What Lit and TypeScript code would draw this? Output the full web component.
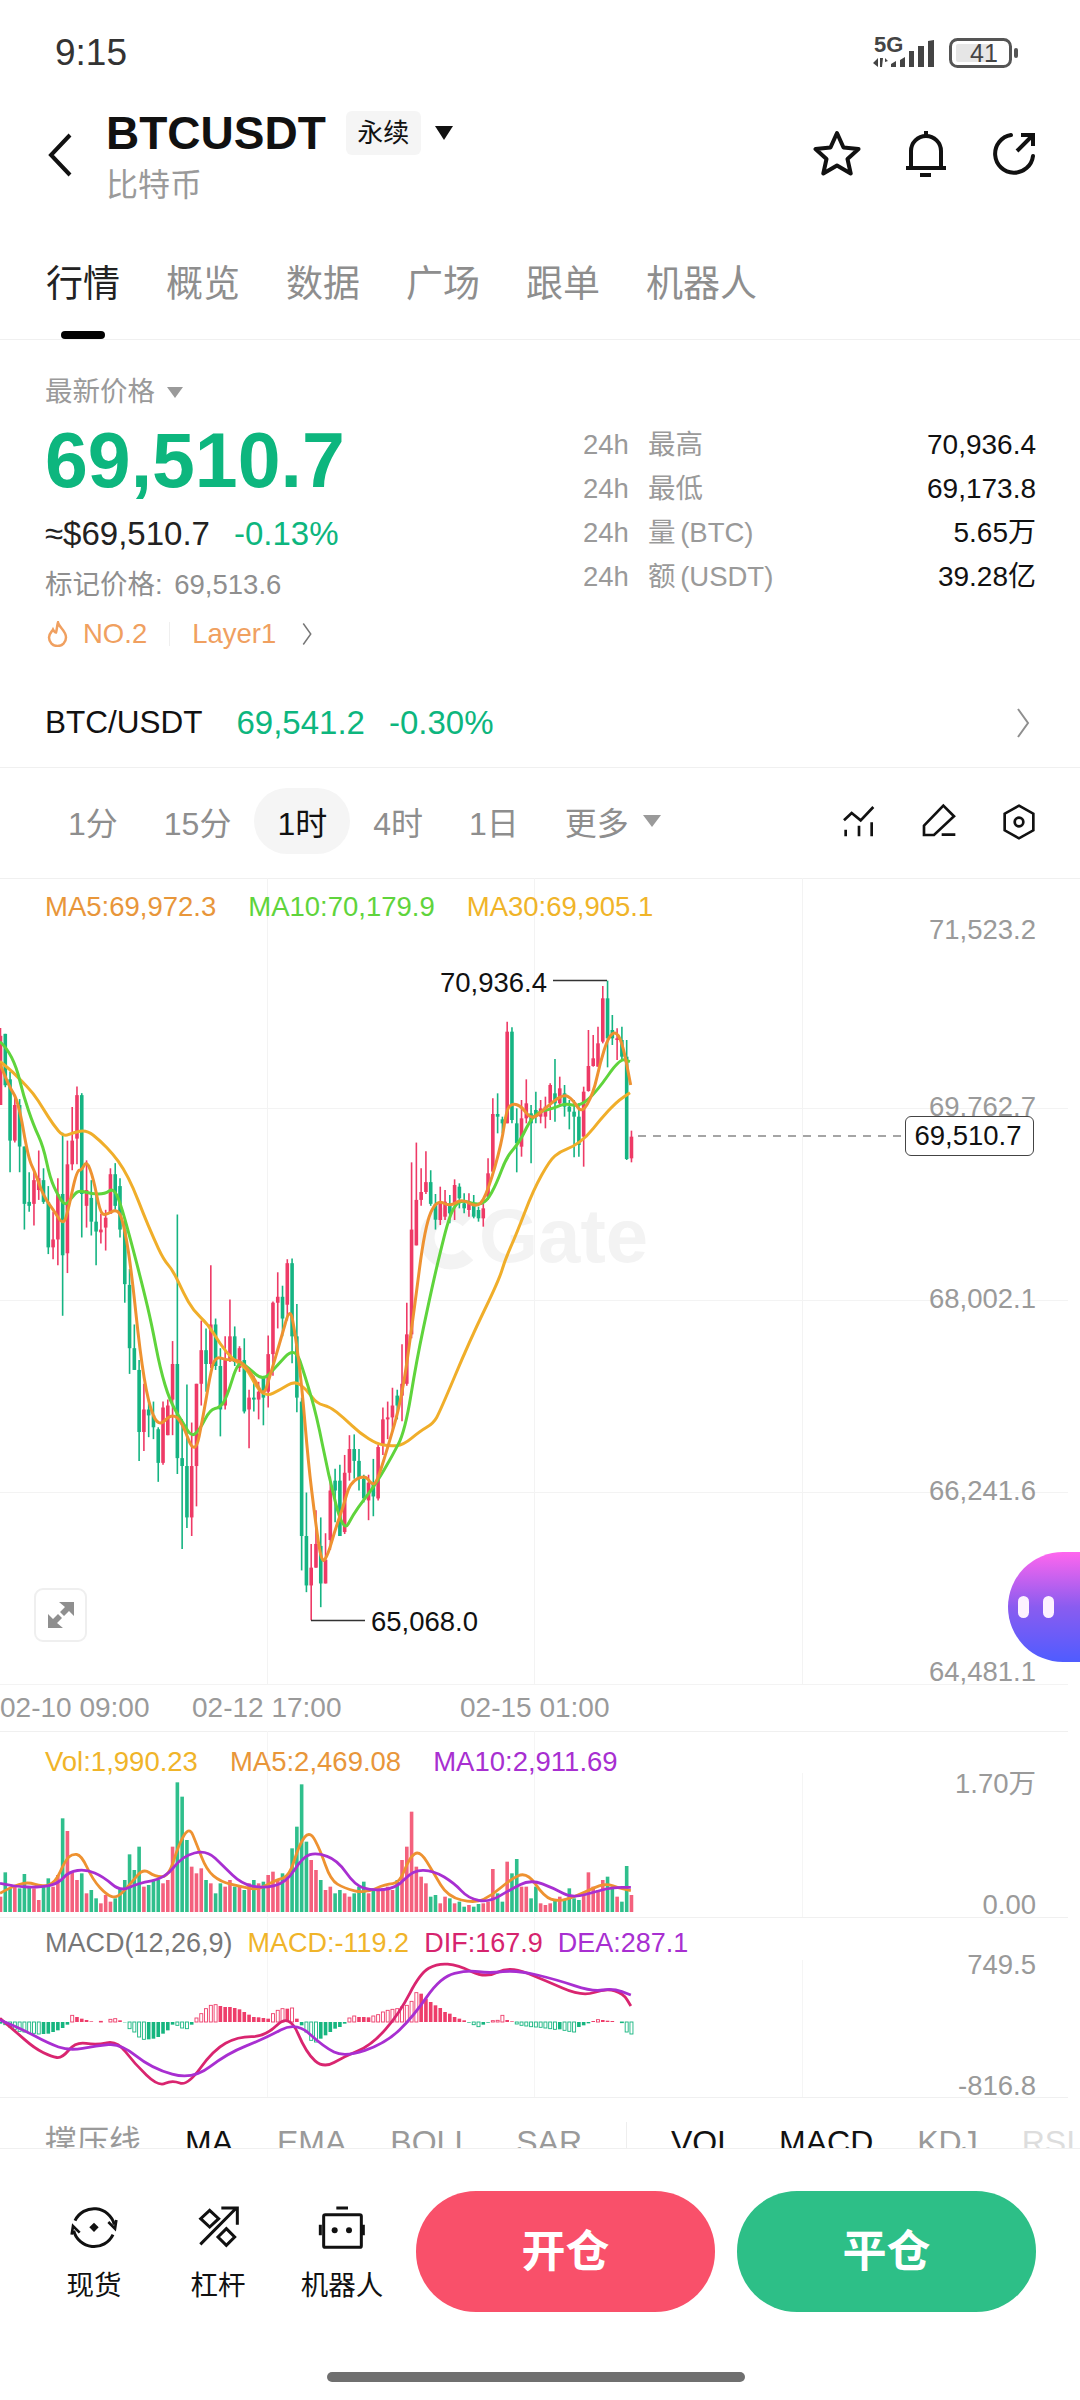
import { LitElement, css, html, svg } from 'lit';
import { customElement } from 'lit/decorators.js';

type Pt = [number, number];
type Raw = [string, number, number, number, number];

// candles traced from the chart: color, wick top, body top, body bottom, wick bottom
const LEFT: Raw[] = [
  ['r',20,40,215,215],['g',35,35,165,170],['g',130,150,305,385],['r',195,215,305,310],['g',200,215,320,385],
  ['g',320,320,465,530],['g',385,460,470,485],['r',380,405,465,520],['r',330,400,430,455],['g',375,405,460,465],
  ['g',420,460,575,592],['r',485,555,575,605],['r',400,440,555,620],['g',285,440,595,748],['r',305,365,590,640],
  ['r',220,305,365,380],['r',168,190,300,365],['g',185,190,440,550],['r',355,430,470,525],['g',405,450,510,545],
  ['g',430,510,535,620],['r',490,530,537,565],['r',480,500,525,583],['r',375,390,490,490],['g',362,390,470,480],
  ['g',400,420,530,550],['g',510,530,668,715],['g',630,670,830,895],['g',770,830,885,885],['g',860,885,1042,1115],
  ['r',920,985,1042,1090],['g',960,985,1000,1055],['g',965,1000,1030,1060],['g',1030,1035,1120,1168],['r',965,980,1120,1125],
  ['r',960,975,1050,1050],['r',812,870,960,1050],['g',492,870,1108,1148],['g',1010,1108,1128,1338],['g',922,1128,1258,1285],
  ['r',1018,1128,1258,1305],['r',920,920,1128,1230],['r',760,835,920,975],['g',780,835,870,940],['r',620,770,870,880],
  ['g',755,770,875,885],['g',830,875,985,1053],['r',800,860,975,985],['r',707,800,860,865],['g',775,800,865,875],
  ['r',825,830,880,890],['g',805,860,990,995],['r',935,955,985,1083],['g',900,955,960,990],['r',915,940,960,1010],
  ['g',900,905,955,1025],['r',798,845,940,980],['r',712,715,845,900],['r',638,700,715,780],['g',672,700,755,800],
  ['r',605,615,720,760],['g',603,615,800,868],['g',718,800,955,992],['g',955,965,1305,1392],['g',1195,1305,1430,1447],
  ['r',1325,1385,1430,1518],['r',1240,1325,1385,1385],['g',1258,1330,1425,1485],['r',1298,1365,1425,1425],['r',1155,1190,1315,1340],
  ['g',1135,1165,1190,1270],['g',1125,1165,1305,1305],['r',1100,1145,1295,1300],['r',1050,1085,1145,1165],['g',1048,1085,1115,1160],
  ['g',1085,1115,1160,1190],['g',1150,1160,1210,1220],['r',1150,1170,1215,1265],['g',1110,1170,1205,1255],['r',1075,1080,1210,1215],
  ['r',980,1010,1075,1100],['r',965,1005,1010,1060],['r',930,975,1005,1040],['g',935,950,975,1010],['r',820,920,950,1015],
  ['r',715,795,920,925],['r',360,530,795,805],['r',310,455,570,570],['r',375,435,455,470],['r',332,410,435,440],
  ['g',380,410,465,470],['g',440,465,505,530],
];

const RIGHT: Raw[] = [
  ['r',680,725,780,795],['r',690,725,770,780],['g',705,730,760,790],['r',658,675,730,780],['g',670,680,715,745],
  ['g',700,730,745,760],['r',700,725,750,770],['g',705,735,770,775],['g',740,750,775,785],['r',730,745,775,800],
  ['r',595,640,710,720],['r',415,462,635,640],['g',400,462,470,520],['g',470,478,490,520],['r',185,215,490,490],
  ['g',202,215,480,490],['g',445,490,550,637],['r',420,475,560,590],['r',358,430,475,490],['g',435,460,490,610],
  ['g',395,450,470,490],['r',420,445,470,490],['r',410,440,470,505],['r',370,375,430,480],['g',297,400,430,485],
  ['r',350,385,430,440],['g',375,400,440,470],['g',420,440,455,508],['g',420,455,470,592],['g',430,470,555,590],
  ['r',380,395,530,620],['r',210,318,393,395],['r',225,295,318,320],['r',200,250,320,320],['r',78,115,245,250],
  ['g',62,115,235,322],['g',165,210,235,255],['r',205,235,240,300],['g',200,240,290,300],['g',240,290,597,600],
  ['r',512,530,595,607],
];

const leftY = (y: number) => 1020 + y / 2.529;
const rightY = (y: number) => 960 + y / 3;
const candleX = (i: number) => 4.78 * i + 0.5;

const candles = [
  ...LEFT.map(([c, a, b, d, e]) => ({ c, hi: leftY(a), top: leftY(b), bot: leftY(d), lo: leftY(e) })),
  ...RIGHT.map(([c, a, b, d, e]) => ({ c, hi: rightY(a), top: rightY(b), bot: rightY(d), lo: rightY(e) })),
];

const fromLeft = (pts: number[][]): Pt[] => pts.map(([x, y]) => [x / 3, leftY(y)]);
const fromRight = (pts: number[][]): Pt[] => pts.map(([x, y]) => [400 + x / 3, rightY(y)]);
const fromLower = (pts: number[][]): Pt[] => pts.map(([x, y]) => [x / 1.452, 1680 + y / 3]);

const MA30: Pt[] = [
  ...fromLeft([[0,105],[30,125],[60,150],[100,185],[130,225],[160,265],[190,295],[220,285],[260,278],[300,305],[340,340],[370,375],[400,425],[430,490],[460,550],[490,605],[520,635],[550,690],[580,735],[625,770],[660,820],[700,860],[740,880],[770,930],[800,952],[840,935],[885,912],[920,935],[950,970],[990,978],[1030,1005],[1080,1045],[1130,1072],[1170,1078],[1210,1075],[1260,1040],[1300,1020],[1320,990]]),
  [470, 1340],
  [499, 1280],
  ...fromRight([[315,900],[350,820],[400,690],[450,600],[480,575],[520,560],[560,530],[600,480],[650,425],[690,398]]),
];

const MA5: Pt[] = [
  ...fromLeft([[0,110],[25,165],[55,205],[85,350],[105,385],[130,445],[160,480],[190,520],[205,480],[230,380],[245,380],[260,355],[280,400],[300,485],[315,495],[355,475],[375,530],[395,640],[420,840],[445,970],[475,1030],[515,995],[545,1015],[585,1105],[610,1000],[630,900],[645,850],[680,860],[720,860],[760,900],[790,955],[810,900],[845,800],[870,725],[885,790],[905,920],[925,1120],[945,1260],[965,1378],[985,1350],[1005,1290],[1030,1230],[1050,1170],[1095,1150],[1115,1175],[1130,1170],[1160,1090],[1205,960],[1240,750],[1275,520]]),
  ...fromRight([[110,718],[150,740],[185,716],[235,745],[265,690],[305,550],[320,445],[340,430],[365,440],[395,480],[430,450],[490,400],[520,420],[545,462],[580,400],[600,310],[625,230],[650,213],[670,260],[692,375]]),
];

const MA10: Pt[] = [
  ...fromLeft([[0,55],[20,70],[50,120],[70,190],[100,265],[130,320],[150,400],[175,445],[195,470],[215,450],[235,430],[275,440],[315,440],[340,425],[360,460],[390,550],[430,680],[455,770],[480,880],[510,965],[550,1020],[575,1055],[600,1035],[630,985],[660,980],[680,955],[715,860],[745,880],[790,912],[825,880],[885,825],[915,900],[950,1000],[985,1150],[1030,1298],[1060,1250],[1090,1215],[1130,1170],[1175,1105],[1215,1040],[1250,860],[1290,700]]),
  ...fromRight([[115,900],[150,760],[180,718],[230,735],[260,725],[290,670],[320,590],[360,545],[400,460],[460,445],[495,430],[540,440],[590,395],[660,295],[690,305]]),
];

const VOL_TOPS = [
  650,577,625,620,625,582,620,625,660,620,595,620,585,415,453,575,600,580,640,630,
  655,670,645,665,655,625,600,523,570,500,620,615,600,600,610,600,500,307,350,480,
  560,580,565,600,610,640,610,620,600,620,615,630,610,600,610,605,585,575,600,580,
  590,505,440,313,485,540,570,600,630,620,640,630,640,650,640,620,605,640,625,625,
  625,620,630,600,540,500,395,560,590,610,650,645,670,650,655,670,665,680,675,680,
  672,670,665,567,640,665,545,580,537,620,620,655,620,670,675,670,660,650,660,625,
  655,660,640,577,620,630,600,590,620,650,665,558,645,
];

const VOL_MA5 = fromLower([[0,640],[15,622],[40,605],[60,620],[80,610],[95,540],[105,522],[118,525],[135,600],[155,645],[170,655],[190,610],[208,565],[225,590],[245,590],[260,490],[275,440],[285,490],[300,570],[320,605],[350,620],[375,630],[400,600],[420,590],[435,490],[450,452],[465,510],[480,600],[500,625],[530,640],[560,612],[580,610],[595,530],[610,512],[630,580],[650,650],[690,670],[715,645],[740,600],[765,575],[790,650],[810,665],[835,650],[860,625],[880,610],[900,625],[916,632]]);
const VOL_MA10 = fromLower([[0,610],[20,620],[60,622],[85,610],[100,575],[125,568],[150,590],[175,635],[200,610],[240,595],[265,528],[300,510],[325,560],[350,610],[380,625],[415,610],[440,530],[460,518],[490,540],[515,615],[540,632],[575,625],[600,570],[630,572],[660,610],[680,655],[710,667],[740,630],[770,598],[805,625],[830,655],[870,632],[890,622],[916,622]]);

// positive = red above the zero line, negative = green below
const MACD_BARS = [
  -5,-8,-15,-22,-28,-30,-33,-34,-36,-36,-35,-30,-25,-18,-8,
  20,15,10,6,2,0,2,0,8,10,5,
  -1,-20,-30,-45,-52,-52,-50,-45,-35,-25,-8,-10,-18,-20,-8,
  12,25,40,50,52,48,45,45,42,38,30,22,15,14,12,10,25,35,40,40,42,10,
  -10,-30,-55,-60,-50,-40,-30,-20,-15,-5,
  12,18,15,15,14,18,22,30,35,38,40,45,50,62,88,85,70,60,50,42,30,25,15,10,5,
  -2,-8,-14,-8,-2,
  4,5,20,6,2,
  -6,-10,-12,-14,-15,-16,-18,-20,-22,-22,-25,-28,-30,-15,-10,-4,
  3,7,6,4,3,0,-2,-30,-36,
];

const DIF = fromLower([[0,1015],[20,1050],[50,1105],[75,1130],[90,1135],[110,1085],[140,1095],[170,1082],[195,1150],[230,1220],[250,1200],[272,1218],[310,1110],[345,1070],[385,1070],[420,1000],[445,1120],[470,1165],[500,1130],[540,1095],[580,1000],[610,880],[635,850],[665,855],[705,895],[740,858],[790,900],[845,950],[880,925],[905,940],[916,978]]);
const DEA = fromLower([[0,1020],[30,1045],[70,1090],[100,1112],[140,1098],[175,1090],[220,1165],[280,1200],[330,1120],[385,1075],[430,1025],[470,1100],[500,1132],[560,1090],[600,1010],[640,890],[680,870],[710,880],[750,870],[810,900],[860,935],[890,925],[916,945]]);

// rounds the corners of a traced line through the midpoints
function smooth(pts: Pt[]): string {
  let d = `M${pts[0][0]} ${pts[0][1]}`;
  for (let i = 1; i < pts.length - 1; i++) {
    const mx = (pts[i][0] + pts[i + 1][0]) / 2;
    const my = (pts[i][1] + pts[i + 1][1]) / 2;
    d += `Q${pts[i][0]} ${pts[i][1]} ${mx} ${my}`;
  }
  const last = pts[pts.length - 1];
  return d + `L${last[0]} ${last[1]}`;
}

const STATS = [
  ['最高', '70,936.4'],
  ['最低', '69,173.8'],
  ['量 (BTC)', '5.65万'],
  ['额 (USDT)', '39.28亿'],
];

const chevron = (cls: string) => html`
  <svg class=${cls} viewBox="0 0 14 32"><path d="M2 2 L12 16 L2 30" fill="none" stroke="currentColor" stroke-width="2"/></svg>
`;

@customElement('app-root')
export class AppRoot extends LitElement {
  static styles = css`
    :host {
      display: block;
      position: relative;
      width: 1080px;
      height: 2400px;
      overflow: hidden;
      background: #ffffff;
      color: #111111;
      font-family: 'Liberation Sans', 'Noto Sans CJK SC', sans-serif;
      font-size: 27.5px;
    }

    svg {
      display: block;
    }

    .status {
      height: 106px;
      display: flex;
      align-items: center;
      justify-content: space-between;
      padding: 0 60px 0 55px;
    }

    .time {
      font-size: 37px;
      color: #333333;
    }

    .status-text {
      font-weight: 700;
      font-size: 22px;
      fill: #444444;
    }

    .battery-text {
      font-size: 25px;
      fill: #444444;
    }

    .header {
      height: 114px;
      display: flex;
      padding: 0 41px 0 46px;
    }

    .back {
      width: 30px;
      height: 44px;
      margin: 27px 30px 0 0;
    }

    .title-row {
      display: flex;
      align-items: center;
      height: 54px;
    }

    .symbol {
      font-size: 46px;
      font-weight: 700;
    }

    .badge {
      margin-left: 20px;
      width: 75px;
      height: 44px;
      line-height: 44px;
      text-align: center;
      font-size: 26px;
      background: #f5f5f5;
      border-radius: 6px;
    }

    .caret {
      width: 0;
      height: 0;
      border-left: 9px solid transparent;
      border-right: 9px solid transparent;
      border-top: 14px solid #111111;
      margin-left: 14px;
    }

    .name {
      height: 50px;
      line-height: 50px;
      font-size: 32px;
      color: #9a9a9a;
    }

    .header-icons {
      margin-left: auto;
      display: flex;
      align-items: flex-start;
      padding-top: 24px;
    }

    .star {
      margin-right: 45px;
    }

    .bell {
      margin-right: 45px;
    }

    .tabs {
      height: 120px;
      box-sizing: border-box;
      display: flex;
      gap: 46px;
      padding: 41px 0 0 46px;
      border-bottom: 1px solid #f0f0f0;
      font-size: 37px;
      color: #8e8e8e;
    }

    .tab {
      display: flex;
      flex-direction: column;
      line-height: 48px;
    }

    .tab.active {
      color: #222222;
    }

    .tab.active::after {
      content: '';
      align-self: center;
      width: 44px;
      height: 8px;
      margin-top: 22px;
      border-radius: 4px;
      background: #000000;
    }

    .quote {
      height: 340px;
      box-sizing: border-box;
      display: flex;
      padding: 34px 44px 0 45px;
    }

    .quote-left {
      width: 538px;
    }

    .label {
      display: flex;
      align-items: center;
      line-height: 36px;
      color: #9a9a9a;
    }

    .caret.small {
      border-left-width: 8px;
      border-right-width: 8px;
      border-top: 11px solid #9a9a9a;
      margin-left: 12px;
    }

    .price {
      margin-top: 10px;
      font-size: 77px;
      line-height: 80px;
      font-weight: 700;
      color: #0db67e;
    }

    .approx {
      margin-top: 14px;
      display: flex;
      gap: 24px;
      font-size: 33px;
      line-height: 40px;
      color: #222222;
    }

    .up {
      color: #0db67e;
    }

    .mark {
      margin-top: 13px;
      line-height: 36px;
      color: #8f8f8f;
      word-spacing: 4px;
    }

    .tags {
      margin-top: 13px;
      display: flex;
      align-items: center;
      height: 36px;
      color: #f0a060;
    }

    .flame {
      width: 21px;
      height: 26px;
      margin: 0 15px 0 2px;
    }

    .tag-line {
      width: 1px;
      height: 24px;
      margin: 0 22px;
      background: #efefef;
    }

    .tags .chev {
      width: 14px;
      height: 24px;
      margin-left: 24px;
      color: #777777;
    }

    .stats {
      flex: 1;
      padding-top: 49px;
    }

    .stat {
      display: flex;
      height: 44px;
      line-height: 44px;
      color: #9a9a9a;
      word-spacing: -3px;
    }

    .stat span:first-child {
      width: 65px;
    }

    .stat b {
      margin-left: auto;
      font-weight: 400;
      font-size: 28px;
      color: #111111;
    }

    .spot {
      height: 88px;
      box-sizing: border-box;
      display: flex;
      align-items: center;
      gap: 34px;
      padding: 0 50px 2px 45px;
      font-size: 31.500px;
      border-bottom: 1px solid #f0f0f0;
    }

    .spot .up {
      font-size: 33px;
    }

    .spot .gap {
      margin-left: -10px;
    }

    .spot .chev {
      width: 14px;
      height: 32px;
      margin-left: auto;
      color: #8f8f8f;
    }

    .periods {
      height: 110px;
      box-sizing: border-box;
      display: flex;
      padding: 20px 42px 0 45px;
      font-size: 32px;
      color: #8e8e8e;
    }

    .period {
      display: flex;
      align-items: center;
      height: 66px;
      padding: 0 23px;
      border-radius: 33px;
    }

    .period.active {
      background: #f5f5f5;
      color: #111111;
    }

    .caret.more {
      border-left-width: 9px;
      border-right-width: 9px;
      border-top: 12px solid #9a9a9a;
      margin-left: 14px;
    }

    .tools {
      margin-left: auto;
      display: flex;
      gap: 42px;
      padding-top: 15px;
    }

    .tools svg {
      width: 38px;
      height: 38px;
    }

    .chart {
      position: relative;
    }

    .chart svg {
      position: absolute;
      left: 0;
      top: 0;
      width: 1080px;
      overflow: visible;
    }

    .main {
      height: 853px;
    }

    .vol {
      height: 186px;
    }

    .macd {
      height: 181px;
    }

    .legend {
      position: relative;
      z-index: 1;
      display: flex;
      line-height: 38px;
      padding-left: 45px;
      gap: 32px;
    }

    .main .legend {
      padding-top: 10px;
    }

    .vol .legend {
      padding-top: 12px;
    }

    .macd .legend {
      padding-top: 7px;
      gap: 15px;
      font-size: 27px;
    }

    text {
      font-family: 'Liberation Sans', 'Noto Sans CJK SC', sans-serif;
      font-size: 27.5px;
    }

    .axis {
      fill: #9a9a9a;
      text-anchor: end;
    }

    text.time-label {
      fill: #9a9a9a;
      font-size: 28px;
    }

    .extreme {
      fill: #111111;
    }

    text.watermark {
      font-size: 76px;
      font-weight: 700;
      fill: #f3f3f3;
    }

    .price-tag {
      position: absolute;
      left: 905px;
      top: 238px;
      width: 129px;
      height: 40px;
      box-sizing: border-box;
      border: 1px solid #444444;
      border-radius: 6px;
      background: #ffffff;
      line-height: 38px;
      text-align: center;
      padding-right: 3px;
    }

    .expand {
      position: absolute;
      left: 34px;
      top: 710px;
      width: 53px;
      height: 54px;
      box-sizing: border-box;
      display: flex;
      align-items: center;
      justify-content: center;
      border: 2px solid #efefef;
      border-radius: 9px;
      background: #ffffff;
    }

    .expand svg {
      position: static;
      width: 26px;
      height: 28px;
    }

    .indicators {
      height: 50px;
      box-sizing: border-box;
      overflow: hidden;
      display: flex;
      gap: 44px;
      padding: 24px 0 0 45px;
      font-size: 32px;
      line-height: 40px;
      white-space: nowrap;
      color: #9a9a9a;
    }

    .indicators .on {
      color: #111111;
    }

    .indicators .fade {
      color: #dddddd;
    }

    .indicators i {
      width: 1px;
      height: 40px;
      background: #eeeeee;
    }

    .actions {
      height: 252px;
      box-sizing: border-box;
      border-top: 1px solid #f0f0f0;
      padding-top: 42px;
    }

    .action-row {
      display: flex;
      align-items: flex-start;
      padding-left: 32px;
    }

    .shortcuts {
      display: flex;
      width: 384px;
    }

    .shortcut {
      width: 124px;
      display: flex;
      flex-direction: column;
      align-items: center;
      padding-top: 11px;
      white-space: nowrap;
    }

    .shortcut svg {
      width: 50px;
      height: 50px;
    }

    .shortcut span {
      margin-top: 16px;
      line-height: 36px;
    }

    .btn {
      width: 299px;
      height: 121px;
      line-height: 121px;
      border-radius: 60px;
      text-align: center;
      font-size: 44px;
      font-weight: 700;
      color: #ffffff;
    }

    .btn.open {
      background: #f9506a;
      margin-right: 22px;
    }

    .btn.close {
      background: #2dbf87;
    }

    .home-bar {
      width: 418px;
      height: 10px;
      margin: 60px 0 0 327px;
      border-radius: 5px;
      background: #6f6f6f;
    }

    .bot {
      position: absolute;
      top: 1552px;
      right: 0;
      width: 72px;
      height: 110px;
      box-sizing: border-box;
      display: flex;
      align-items: center;
      gap: 14px;
      padding-left: 10px;
      border-radius: 55px 0 0 55px;
      background: linear-gradient(180deg, #ff66ee 0%, #8a5cf0 50%, #4f5cff 100%);
    }

    .bot span {
      width: 11px;
      height: 22px;
      border-radius: 6px;
      background: #fdf2ff;
    }
  `;

  renderStatus() {
    return html`
      <div class="status">
        <span class="time">9:15</span>
        <svg width="150" height="40" viewBox="870 34 150 40">
          <text class="status-text" x="874" y="53">5G</text>
          <path d="M873 64l5-5v9zM880 59h3l-1 9h-2zM885 59l3 3-3 1z" fill="#444444"/>
          <path d="M891 68v-3l5-3v6zM900 68v-7l5-3v10zM909 68V52h5v16zM918 68V47h6v21zM928 68V42l6-1v27z" fill="#444444"/>
          <rect x="950.500" y="40.500" width="60" height="27" rx="7" fill="none" stroke="#555555" stroke-width="3"/>
          <rect x="956" y="45" width="34" height="18" rx="2" fill="#e6e6e6"/>
          <text class="battery-text" x="970" y="63">41</text>
          <rect x="1014" y="49" width="4" height="10" rx="2" fill="#555555"/>
        </svg>
      </div>
    `;
  }

  renderHeader() {
    return html`
      <div class="header">
        <svg class="back" viewBox="0 0 30 44">
          <path d="M24 2 L5 22 L24 42" fill="none" stroke="#111111" stroke-width="4"/>
        </svg>
        <div>
          <div class="title-row">
            <span class="symbol">BTCUSDT</span>
            <span class="badge">永续</span>
            <span class="caret"></span>
          </div>
          <div class="name">比特币</div>
        </div>
        <div class="header-icons">
          <svg class="star" width="48" height="46" viewBox="0 0 48 46">
            <path d="M24 3l6.500 14.500 15 1.500-11 10 3.200 14.500L24 35.500 10.300 43.500l3.200-14.500-11-10 15-1.500z" fill="none" stroke="#111111" stroke-width="4" stroke-linejoin="round"/>
          </svg>
          <svg class="bell" width="40" height="48" viewBox="0 0 40 48">
            <path d="M5 38V21a15 15 0 0 1 30 0v17" fill="none" stroke="#111111" stroke-width="4"/>
            <path d="M0 38h40M20 1v5" fill="none" stroke="#111111" stroke-width="4"/>
            <rect x="14" y="43" width="11" height="4" fill="#111111"/>
          </svg>
          <svg width="48" height="48" viewBox="0 0 48 48">
            <path d="M20 5A19 19 0 1 0 42 26" fill="none" stroke="#111111" stroke-width="4" stroke-linecap="round"/>
            <path d="M26 21L41 6M30 5h12v11" fill="none" stroke="#111111" stroke-width="4"/>
          </svg>
        </div>
      </div>
    `;
  }

  renderQuote() {
    return html`
      <div class="quote">
        <div class="quote-left">
          <div class="label">最新价格<span class="caret small"></span></div>
          <div class="price">69,510.7</div>
          <div class="approx"><span>≈$69,510.7</span><span class="up">-0.13%</span></div>
          <div class="mark">标记价格: 69,513.6</div>
          <div class="tags">
            <svg class="flame" viewBox="0 0 21 26">
              <path d="M11 1.500C12 6.500 19 9.500 19 16.500A8.500 8.500 0 0 1 2 16.500C2 12.500 5 10.500 6 8.500C7 10.500 8 11.500 9 11.500C10 8.500 10 4.500 11 1.500Z" fill="none" stroke="#f0a060" stroke-width="2.500"/>
            </svg>
            NO.2
            <span class="tag-line"></span>
            Layer1
            ${chevron('chev')}
          </div>
        </div>
        <div class="stats">
          ${STATS.map(
            ([label, value]) => html`
              <div class="stat"><span>24h</span><span>${label}</span><b>${value}</b></div>
            `,
          )}
        </div>
      </div>
    `;
  }

  renderPeriods() {
    const items = ['1分', '15分', '1时', '4时', '1日'];
    return html`
      <div class="periods">
        ${items.map((p) => html`<div class="period ${p === '1时' ? 'active' : ''}">${p}</div>`)}
        <div class="period">更多<span class="caret more"></span></div>
        <div class="tools">
          <svg viewBox="30 40 114 114" fill="none" stroke="#111111" stroke-width="8">
            <path d="M42 92L65 70L92 92L130 52M47 120v20M87 108v32M125 98v42"/>
          </svg>
          <svg viewBox="270 40 114 114" fill="none" stroke="#111111" stroke-width="8">
            <path d="M282 108L340 48L372 80L312 136H282ZM335 135h41"/>
          </svg>
          <svg viewBox="510 40 114 114" fill="none" stroke="#111111" stroke-width="8">
            <path d="M567 48L610 72V122L567 146L524 122V72Z"/>
            <circle cx="567" cy="97" r="13"/>
          </svg>
        </div>
      </div>
    `;
  }

  renderMainChart() {
    const grid = [1108, 1300, 1492, 1684];
    const axis: [string, number][] = [
      ['71,523.2', 939],
      ['69,762.7', 1116],
      ['68,002.1', 1308],
      ['66,241.6', 1500],
      ['64,481.1', 1681],
    ];
    const times: [string, number][] = [
      ['02-10 09:00', 0],
      ['02-12 17:00', 192],
      ['02-15 01:00', 460],
    ];
    return html`
      <div class="chart main">
        <svg height="853" viewBox="0 878 1080 853">
          <path d="M0 878.500H1080" stroke="#f0f0f0"/>
          <path d="M468 1221A24 24 0 1 0 468 1255" fill="none" stroke="#f3f3f3" stroke-width="15"/>
          <text class="watermark" x="479" y="1262">Gate</text>
          ${grid.map((y) => svg`<path d="M0 ${y}.5H1068" stroke="#f3f3f3"/>`)}
          ${[267, 534, 802].map((x) => svg`<path d="M${x}.5 878V1684" stroke="#f3f3f3"/>`)}
          ${candles.map((k, i) => {
            const x = candleX(i);
            const color = k.c === 'r' ? '#ee3a66' : '#15b482';
            return svg`
              <path d="M${x} ${k.hi}V${k.lo}" stroke=${color} stroke-width="1.600"/>
              <rect x=${x - 1.8} y=${k.top} width="3.600" height=${Math.max(k.bot - k.top, 1.5)} fill=${color}/>
            `;
          })}
          <path d=${smooth(MA30)} fill="none" stroke="#f0ae2a" stroke-width="3"/>
          <path d=${smooth(MA10)} fill="none" stroke="#5fd43c" stroke-width="3"/>
          <path d=${smooth(MA5)} fill="none" stroke="#ee9231" stroke-width="3"/>
          <path d="M553 980.500H607" stroke="#333333" stroke-width="1.500"/>
          <text class="extreme" x="440" y="992">70,936.4</text>
          <path d="M311 1620.500H365" stroke="#333333" stroke-width="1.500"/>
          <text class="extreme" x="371" y="1631">65,068.0</text>
          <path d="M638 1136H905" stroke="#888888" stroke-width="1.500" stroke-dasharray="8 7"/>
          ${axis.map(([t, y]) => svg`<text class="axis" x="1036" y=${y}>${t}</text>`)}
          ${times.map(([t, x]) => svg`<text class="time-label" x=${x} y="1717">${t}</text>`)}
        </svg>
        <div class="legend">
          <span style="color: #e8963a">MA5:69,972.3</span>
          <span style="color: #5fd43c">MA10:70,179.9</span>
          <span style="color: #f0b429">MA30:69,905.1</span>
        </div>
        <div class="price-tag">69,510.7</div>
        <div class="expand">
          <svg viewBox="0 0 26 28" fill="#8f8f8f">
            <path d="M11 1H26V15L21 10 16 15 12 11 17 6zM0 27V13L5 18 10 13 14 17 9 22 15 27z"/>
          </svg>
        </div>
      </div>
    `;
  }

  renderVolChart() {
    return html`
      <div class="chart vol">
        <svg height="186" viewBox="0 1731 1080 186">
          <path d="M0 1731.500H1068" stroke="#f0f0f0"/>
          <path d="M267.500 1731V1917M534.500 1731V1917M802.500 1773V1917" stroke="#f5f5f5"/>
          ${VOL_TOPS.map((top, i) => {
            const y = 1680 + top / 3;
            const color = candles[i].c === 'r' ? '#f4617d' : '#2fbf8c';
            return svg`<rect x=${candleX(i) - 1.8} y=${y} width="3.600" height=${1912 - y} fill=${color}/>`;
          })}
          <path d=${smooth(VOL_MA5)} fill="none" stroke="#ee9231" stroke-width="2.800"/>
          <path d=${smooth(VOL_MA10)} fill="none" stroke="#a82fd1" stroke-width="2.800"/>
          <text class="axis" x="1036" y="1793">1.70万</text>
          <text class="axis" x="1036" y="1914">0.00</text>
        </svg>
        <div class="legend">
          <span style="color: #f0b429">Vol:1,990.23</span>
          <span style="color: #e8963a">MA5:2,469.08</span>
          <span style="color: #a82fd1">MA10:2,911.69</span>
        </div>
      </div>
    `;
  }

  renderMacdChart() {
    return html`
      <div class="chart macd">
        <svg height="181" viewBox="0 1917 1080 181">
          <path d="M0 1917.500H1068" stroke="#f0f0f0"/>
          <path d="M267.500 1917V2098M534.500 1917V2098M802.500 1960V2098" stroke="#f5f5f5"/>
          ${MACD_BARS.map((v, i) => {
            const h = Math.abs(v) / 3;
            if (!h) return null;
            const y = v > 0 ? 2022 - h : 2022;
            const color = v > 0 ? '#ee3d6a' : '#16b57f';
            const hollow = i > 0 && Math.abs(v) > Math.abs(MACD_BARS[i - 1]);
            return hollow
              ? svg`<rect x=${candleX(i) - 1.5} y=${y} width="3" height=${h} fill="#ffffff" stroke=${color} stroke-width="0.900"/>`
              : svg`<rect x=${candleX(i) - 1.8} y=${y} width="3.600" height=${h} fill=${color}/>`;
          })}
          <path d=${smooth(DIF)} fill="none" stroke="#d9256f" stroke-width="2.800"/>
          <path d=${smooth(DEA)} fill="none" stroke="#a82fd1" stroke-width="2.800"/>
          <text class="axis" x="1036" y="1974">749.5</text>
          <text class="axis" x="1036" y="2095">-816.8</text>
          <path d="M0 2097.500H1068" stroke="#f0f0f0"/>
        </svg>
        <div class="legend">
          <span style="color: #777777">MACD(12,26,9)</span>
          <span style="color: #f0b429">MACD:-119.2</span>
          <span style="color: #d6246e">DIF:167.9</span>
          <span style="color: #a82fd1">DEA:287.1</span>
        </div>
      </div>
    `;
  }

  renderActions() {
    return html`
      <div class="actions">
        <div class="action-row">
          <div class="shortcuts">
            <div class="shortcut">
              <svg viewBox="58 32 150 150" fill="none" stroke="#111111" stroke-width="9">
                <path d="M76 88A63 63 0 0 1 194 100M190 130A63 63 0 0 1 72 118"/>
                <path d="M176 92l20 20 4-26" stroke-width="8"/>
                <path d="M90 124l-20-20-4 26" stroke-width="8"/>
                <path d="M133 94l14 14-14 14-14-14z" fill="#111111" stroke="none"/>
              </svg>
              <span>现货</span>
            </div>
            <div class="shortcut">
              <svg viewBox="425 40 150 150" fill="none" stroke="#111111" stroke-width="9">
                <path d="M447 167L555 58M510 58h48v50"/>
                <path d="M475 65l27 25-27 25-27-25zM525 120l25 25-25 25-25-25z"/>
              </svg>
              <span>杠杆</span>
            </div>
            <div class="shortcut">
              <svg viewBox="802 32 150 150" fill="none" stroke="#111111" stroke-width="9">
                <rect x="822" y="70" width="113" height="98" rx="5"/>
                <path d="M860 50h35M812 100v32M941 100v32"/>
                <circle cx="855" cy="117" r="9" fill="#111111" stroke="none"/>
                <circle cx="898" cy="117" r="9" fill="#111111" stroke="none"/>
              </svg>
              <span>机器人</span>
            </div>
          </div>
          <div class="btn open">开仓</div>
          <div class="btn close">平仓</div>
        </div>
        <div class="home-bar"></div>
      </div>
    `;
  }

  render() {
    return html`
      ${this.renderStatus()}
      ${this.renderHeader()}
      <div class="tabs">
        <div class="tab active">行情</div>
        <div class="tab">概览</div>
        <div class="tab">数据</div>
        <div class="tab">广场</div>
        <div class="tab">跟单</div>
        <div class="tab">机器人</div>
      </div>
      ${this.renderQuote()}
      <div class="spot">
        <span>BTC/USDT</span>
        <span class="up">69,541.2</span>
        <span class="up gap">-0.30%</span>
        ${chevron('chev')}
      </div>
      ${this.renderPeriods()}
      ${this.renderMainChart()}
      ${this.renderVolChart()}
      ${this.renderMacdChart()}
      <div class="indicators">
        <span>撑压线</span>
        <span class="on">MA</span>
        <span>EMA</span>
        <span>BOLL</span>
        <span>SAR</span>
        <i></i>
        <span class="on">VOL</span>
        <span class="on">MACD</span>
        <span>KDJ</span>
        <span class="fade">RSI</span>
      </div>
      ${this.renderActions()}
      <div class="bot"><span></span><span></span></div>
    `;
  }
}
